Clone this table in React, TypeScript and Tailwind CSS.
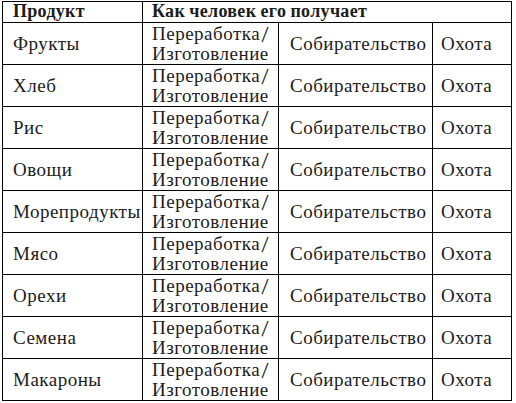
import React from 'react';

const products = [
  'Фрукты',
  'Хлеб',
  'Рис',
  'Овощи',
  'Морепродукты',
  'Мясо',
  'Орехи',
  'Семена',
  'Макароны',
];

const cell = 'border-r border-b border-black flex items-center';

const App: React.FC = () => {
  return (
    <div className="w-[516px] h-[403px] bg-white pl-[2px] pt-[1px] text-[#1c1c1c] font-serif text-[19px] leading-[20px] tracking-[0.5px]">
      <div className="grid grid-cols-[140px_136px_154px_79px] auto-rows-[42px] grid-rows-[21px] w-[510px] border-l border-t border-black">
        <div className={`${cell} font-bold pl-[10px] text-[18px] tracking-[0.3px]`}>Продукт</div>
        <div className={`${cell} col-span-3 font-bold pl-[9px] text-[18px] tracking-[0.3px]`}>
          Как человек его получает
        </div>
        {products.map((p) => (
          <React.Fragment key={p}>
            <div className={`${cell} pl-[10px]`}>{p}</div>
            <div className={`${cell} pl-[9px]`}>
              <span>
                Переработка/
                <br />
                Изготовление
              </span>
            </div>
            <div className={`${cell} pl-[11px]`}>Собирательство</div>
            <div className={`${cell} pl-[8px]`}>Охота</div>
          </React.Fragment>
        ))}
      </div>
    </div>
  );
};

export default App;
